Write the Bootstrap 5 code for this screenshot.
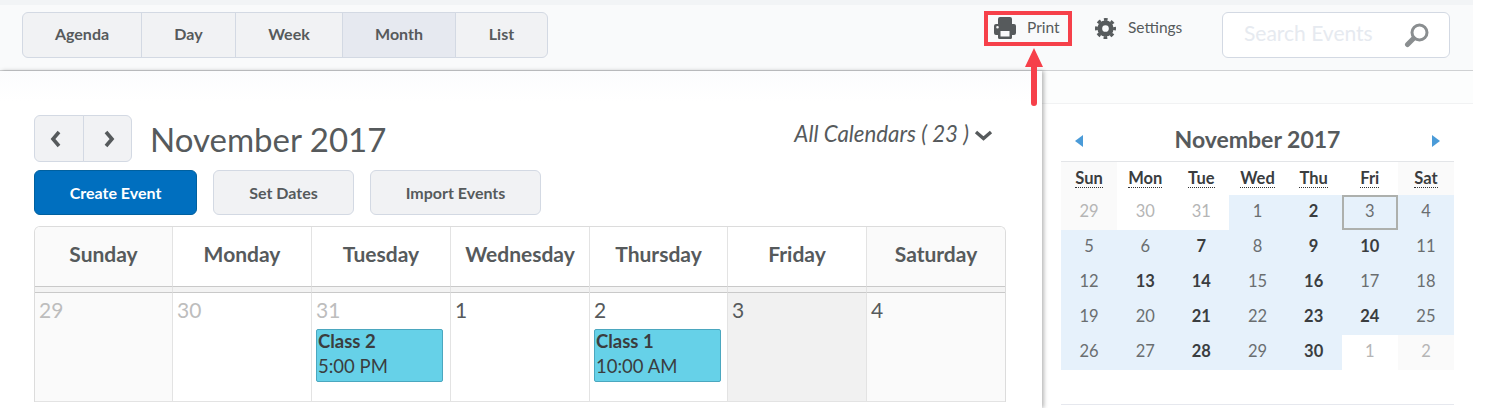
<!DOCTYPE html>
<html lang="en">
<head>
<meta charset="utf-8">
<title>Calendar</title>
<link href="https://cdn.jsdelivr.net/npm/bootstrap@5.3.0/dist/css/bootstrap.min.css" rel="stylesheet">
<style>
html,body{height:408px;overflow:hidden}
body{font-family:Lato,"Open Sans",sans-serif;color:#565a5c;background:#fff;position:relative}
.top-strip{height:5px;background:#f2f4f6;width:1473px}
.head-bar{height:66px;width:1473px;background:#f9fafb;border-bottom:1px solid #cfd1d3;padding:7px 23px 0 22px}
.btn-d2l{--bs-btn-color:#565a5c;--bs-btn-bg:#f1f2f4;--bs-btn-border-color:#d3d9e3;--bs-btn-hover-color:#565a5c;--bs-btn-hover-bg:#e6e9f0;--bs-btn-hover-border-color:#d3d9e3;--bs-btn-font-size:16px;--bs-btn-font-weight:700;--bs-btn-border-radius:6px;height:45px;padding:0;display:flex;align-items:center;justify-content:center}
.tabs .btn-d2l{height:46px;padding-bottom:2px}
.tabs .t1{width:120px}.tabs .t2{width:95px}.tabs .t3{width:108px}.tabs .t4{width:114px}.tabs .t5{width:93px}
.tabs .btn-d2l.is-on{background:#e6e9f0}
.util{font-size:15.5px;color:#565a5c;text-decoration:none;height:33px}
.util-print{width:87px;margin-right:22px;padding:0 0 1px 8px;gap:11px}
.util-set{gap:12px;padding-bottom:1px;margin-right:39px;width:88px}
.search-wrap{width:228px;height:46px;border:1px solid #d3d9e3;border-radius:6px;background:#fff;padding:0 26px 0 21px}
.search-in{border:0;outline:0;width:160px;font-size:21px;font-family:inherit;background:transparent;padding:0;margin-bottom:4px}
.search-in::placeholder{color:#e6eaf0;opacity:1}
.main-col{width:1042px;height:337px;background:linear-gradient(#fbfcfd,#fff 30px);box-shadow:2px 0 4px rgba(0,0,0,.28);padding:44px 36px 0 34px;position:relative}
.title-row{height:47px}
.pager{width:98px}
.pager .btn-d2l{height:47px;flex:1 1 0}
.chev-l{margin-right:6px}.chev-r{margin-left:4px}
.month-title{font-size:33px;line-height:47px;margin:1px 0 -1px 18px;font-weight:400;color:#565a5c}
.all-cal{font-size:22.3px;font-style:italic;margin:-10px 13px 0 0;gap:5px}
.action-row{margin-top:8px;gap:16px}
.btn-create{--bs-btn-color:#fff;--bs-btn-bg:#006fbf;--bs-btn-border-color:#00609f;--bs-btn-hover-color:#fff;--bs-btn-hover-bg:#006fbf;--bs-btn-hover-border-color:#00609f}
.w-a{width:163px}.w-b{width:141px}.w-c{width:171px}
.cal-grid{margin-top:11px;width:972px;display:grid;grid-template-columns:138px 139px 139px 139px 138px 139px 138px;border:1px solid #dcdcdc;border-bottom:0;border-radius:6px 6px 0 0;overflow:hidden}
.day-h{height:60px;border-right:1px solid #e3e3e3;border-bottom:1px solid #c9c9c9;font-size:21px;font-weight:700;display:flex;align-items:center;justify-content:center;padding-bottom:6px}
.spacer{height:6px;background:#f3f3f3;border-right:1px solid #e3e3e3;border-bottom:1px solid #c9c9c9}
.day-c{height:109px;border-right:1px solid #e3e3e3;border-bottom:1px solid #e3e3e3;padding:4px 4px 0;font-size:21px;line-height:26px}
.wk{background:#fafafa}.muted-d{color:#bdbdbd}.today-c{background:#f1f1f1}.last-c{border-right:0}
.thick{box-shadow:-1px 0 0 #e3e3e3}
.ev{margin-top:6px;width:127px;height:53px;background:#66d1e8;border:1px solid #4ba7bf;border-radius:2px;color:#3a3d3f;font-size:18.5px;line-height:25px;padding:0 1px}
.ev b{display:block;font-weight:700;margin-top:-1px}
.side-col{width:444px}
.band{height:33px;width:431px;background:#fcfdfd;border-bottom:1px solid #f1f2f3}
.mini{margin:0 0 0 19px;width:393px}
.mini-head{height:57px;padding:23px 14px 0 14px}
.mini-title{font-size:23px;font-weight:700;margin:-1px 0 0;color:#565a5c}
.mini-grid{display:grid;grid-template-columns:repeat(7,1fr);border-top:1px solid #e3e5e8;text-align:center}
.mh{height:33px;color:#3a3d3f;font-weight:700;font-size:16.5px;display:flex;align-items:center;justify-content:center}
.mh span{border-bottom:1px dotted #333;line-height:18px}
.md{height:35px;display:flex;align-items:center;justify-content:center;color:#6a6e70;font-size:16.5px;padding-bottom:3px}
.md.in{background:#e6f1fb}.md.out{color:#b5b5b5}.md.wke{background:#fafafa}
.md.has{font-weight:700;color:#3a3d3f}
.md.sel{outline:2px solid #adb0ad;outline-offset:-2px}
.mh.wke{background:#fafafa}
.mini-foot{margin-top:34px;border-top:1px solid #e6e8ee}
.mark-box{position:absolute;left:984px;top:11px;width:88px;height:35px;border:4px solid #f6404a}
.mark-arrow{position:absolute;left:1025px;top:48px}
</style>
</head>
<body>
<div class="top-strip"></div>
<header class="head-bar d-flex align-items-start">
  <div class="btn-group tabs" role="group">
    <a class="btn btn-d2l t1">Agenda</a><a class="btn btn-d2l t2">Day</a><a class="btn btn-d2l t3">Week</a><a class="btn btn-d2l is-on t4">Month</a><a class="btn btn-d2l t5">List</a>
  </div>
  <div class="d-flex align-items-start ms-auto">
    <a class="util util-print d-flex align-items-center" href="#">
      <svg width="22" height="22" viewBox="0 0 22 22" class="flex-shrink-0"><path fill="#565a5c" fill-rule="evenodd" d="M6 0h10a2 2 0 0 1 2 2v5h2a2 2 0 0 1 2 2v7a2 2 0 0 1-2 2h-2v2.500a1.500 1.500 0 0 1-1.500 1.500h-11A1.500 1.500 0 0 1 4 20.500V18H2a2 2 0 0 1-2-2V9a2 2 0 0 1 2-2h2V2a2 2 0 0 1 2-2zM6.500 14v5.500h9V14zM3.500 9a1.300 1.300 0 1 0 0 2.600 1.300 1.300 0 0 0 0-2.600z"/></svg>
      <span>Print</span>
    </a>
    <a class="util util-set d-flex align-items-center" href="#">
      <svg width="21" height="21" viewBox="0 0 22 22" class="flex-shrink-0"><circle cx="11" cy="11" r="6" fill="none" stroke="#565a5c" stroke-width="5"/><circle cx="11" cy="11" r="9.500" fill="none" stroke="#565a5c" stroke-width="3" stroke-dasharray="3.900 3.560" stroke-dashoffset="1.950"/></svg>
      <span>Settings</span>
    </a>
    <div class="search-wrap d-flex align-items-center justify-content-between">
      <input class="search-in" placeholder="Search Events" aria-label="Search Events">
      <svg width="25" height="25" viewBox="0 0 25 25" class="flex-shrink-0"><circle cx="15.500" cy="9.500" r="7.500" fill="#fff" stroke="#8a8e90" stroke-width="3"/><path d="M9.500 15.500L3.500 21.500" stroke="#8a8e90" stroke-width="5" stroke-linecap="round"/></svg>
    </div>
  </div>
</header>
<div class="d-flex">
  <main class="main-col">
    <div class="d-flex align-items-center title-row">
      <div class="btn-group pager">
        <a class="btn btn-d2l"><svg class="chev-l" width="11" height="18" viewBox="0 0 11 18"><path d="M9 2L3 9l6 7" fill="none" stroke="#565a5c" stroke-width="3.600"/></svg></a>
        <a class="btn btn-d2l"><svg class="chev-r" width="11" height="18" viewBox="0 0 11 18"><path d="M2 2l6 7-6 7" fill="none" stroke="#565a5c" stroke-width="3.600"/></svg></a>
      </div>
      <h1 class="month-title">November 2017</h1>
      <div class="all-cal d-flex align-items-center ms-auto">
        <span>All Calendars ( 23 )</span>
        <svg class="mt-1" width="19" height="11" viewBox="0 0 19 11"><path d="M2 2l7.500 6.500L17 2" fill="none" stroke="#565a5c" stroke-width="3.400"/></svg>
      </div>
    </div>
    <div class="d-flex action-row">
      <a class="btn btn-d2l btn-create w-a">Create Event</a>
      <a class="btn btn-d2l w-b">Set Dates</a>
      <a class="btn btn-d2l w-c">Import Events</a>
    </div>
    <div class="cal-grid">
      <div class="day-h wk">Sunday</div><div class="day-h">Monday</div><div class="day-h">Tuesday</div><div class="day-h">Wednesday</div><div class="day-h thick">Thursday</div><div class="day-h">Friday</div><div class="day-h wk last-c">Saturday</div>
      <div class="spacer"></div><div class="spacer"></div><div class="spacer"></div><div class="spacer"></div><div class="spacer thick"></div><div class="spacer"></div><div class="spacer last-c"></div>
      <div class="day-c wk muted-d">29</div>
      <div class="day-c muted-d">30</div>
      <div class="day-c"><span class="muted-d">31</span><div class="ev"><b>Class 2</b>5:00 PM</div></div>
      <div class="day-c">1</div>
      <div class="day-c thick">2<div class="ev"><b>Class 1</b>10:00 AM</div></div>
      <div class="day-c today-c">3</div>
      <div class="day-c wk last-c">4</div>
    </div>
  </main>
  <aside class="side-col">
    <div class="band"></div>
    <div class="mini">
      <div class="mini-head d-flex justify-content-between align-items-start">
        <svg class="mt-2" width="8" height="12" viewBox="0 0 8 12"><path d="M8 0L0 6l8 6z" fill="#4a9bd8"/></svg>
        <h2 class="mini-title">November 2017</h2>
        <svg class="mt-2" width="8" height="12" viewBox="0 0 8 12"><path d="M0 0l8 6-8 6z" fill="#4a9bd8"/></svg>
      </div>
      <div class="mini-grid">
        <div class="mh wke"><span>Sun</span></div><div class="mh"><span>Mon</span></div><div class="mh"><span>Tue</span></div><div class="mh"><span>Wed</span></div><div class="mh"><span>Thu</span></div><div class="mh"><span>Fri</span></div><div class="mh wke"><span>Sat</span></div>
        <div class="md out wke">29</div><div class="md out">30</div><div class="md out">31</div><div class="md in">1</div><div class="md in has">2</div><div class="md in sel">3</div><div class="md in">4</div>
        <div class="md in">5</div><div class="md in">6</div><div class="md in has">7</div><div class="md in">8</div><div class="md in has">9</div><div class="md in has">10</div><div class="md in">11</div>
        <div class="md in">12</div><div class="md in has">13</div><div class="md in has">14</div><div class="md in">15</div><div class="md in has">16</div><div class="md in">17</div><div class="md in">18</div>
        <div class="md in">19</div><div class="md in">20</div><div class="md in has">21</div><div class="md in">22</div><div class="md in has">23</div><div class="md in has">24</div><div class="md in">25</div>
        <div class="md in">26</div><div class="md in">27</div><div class="md in has">28</div><div class="md in">29</div><div class="md in has">30</div><div class="md out">1</div><div class="md out wke">2</div>
      </div>
      <div class="mini-foot"></div>
    </div>
  </aside>
</div>
<div class="mark-box"></div>
<svg class="mark-arrow" width="18" height="58" viewBox="0 0 18 58"><path d="M9 0l9 19H12v36a3 3 0 0 1-6 0V19H0z" fill="#f6404a"/></svg>
<script src="https://cdn.jsdelivr.net/npm/bootstrap@5.3.0/dist/js/bootstrap.bundle.min.js"></script>
</body>
</html>
